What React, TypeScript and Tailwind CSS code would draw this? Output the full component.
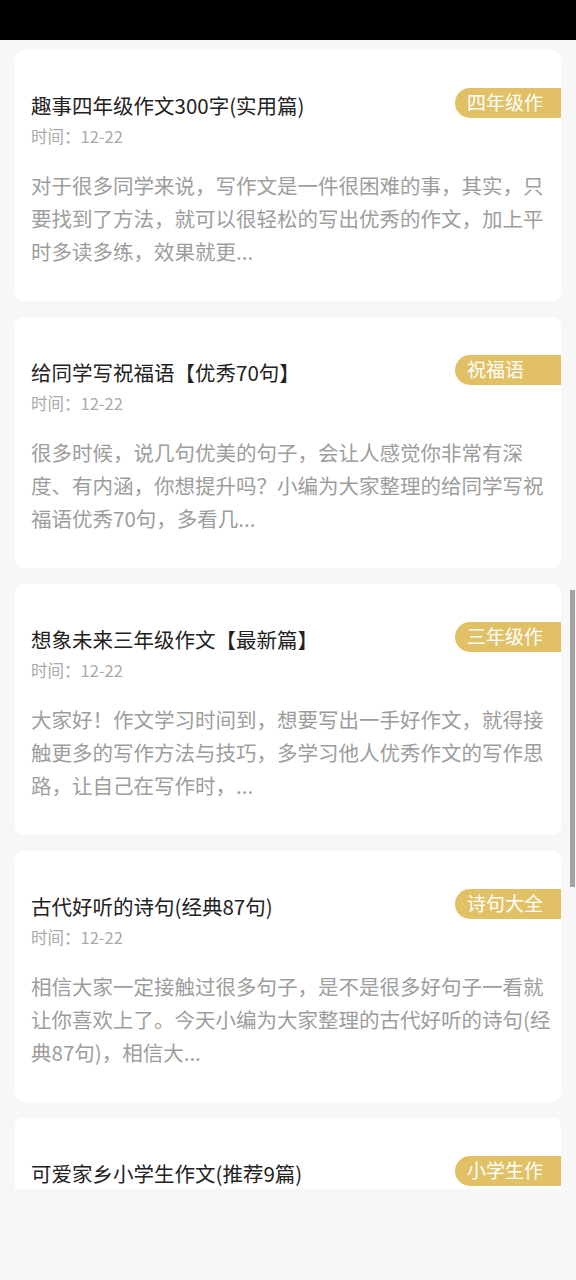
const articles = [
  {
    title: '趣事四年级作文300字(实用篇)',
    tag: '四年级作文',
    time: '12-22',
    desc: '对于很多同学来说，写作文是一件很困难的事，其实，只要找到了方法，就可以很轻松的写出优秀的作文，加上平时多读多练，效果就更...',
  },
  {
    title: '给同学写祝福语【优秀70句】',
    tag: '祝福语',
    time: '12-22',
    desc: '很多时候，说几句优美的句子，会让人感觉你非常有深度、有内涵，你想提升吗？小编为大家整理的给同学写祝福语优秀70句，多看几...',
  },
  {
    title: '想象未来三年级作文【最新篇】',
    tag: '三年级作文',
    time: '12-22',
    desc: '大家好！作文学习时间到，想要写出一手好作文，就得接触更多的写作方法与技巧，多学习他人优秀作文的写作思路，让自己在写作时，...',
  },
  {
    title: '古代好听的诗句(经典87句)',
    tag: '诗句大全',
    time: '12-22',
    desc: '相信大家一定接触过很多句子，是不是很多好句子一看就让你喜欢上了。今天小编为大家整理的古代好听的诗句(经典87句)，相信大...',
  },
  {
    title: '可爱家乡小学生作文(推荐9篇)',
    tag: '小学生作文',
    time: '12-22',
    desc: '家乡是每个人心中最温暖的地方，小编为大家整理的可爱家乡小学生作文(推荐9篇)，希望对大家有所帮助，欢迎阅读...',
  },
]

function ArticleCard({ item }: { item: (typeof articles)[number] }) {
  return (
    <div className="relative bg-white rounded-[8px] pt-[41px] pb-[33px] pl-4 pr-[8px]">
      <div className="pr-[120px] text-[20.5px] leading-[28px] text-[#222] truncate">{item.title}</div>
      <div className="mt-[6px] text-[16.5px] leading-[22px] text-[#aaa]">时间：{item.time}</div>
      <p className="mt-[22px] text-[20.5px] leading-[33px] text-[#9d9d9d]">{item.desc}</p>
      {/* tag is fixed width, extra characters wrap out of view */}
      <div className="absolute right-0 top-[38px] w-[106px] h-[30px] overflow-hidden rounded-l-full bg-[#e2c166] pl-3 text-[19px] leading-[27px] text-white break-all">
        {item.tag}
      </div>
    </div>
  )
}

export default function App() {
  return (
    <div
      className="relative w-[576px] h-[1280px] bg-[#f7f7f7] flex flex-col overflow-hidden"
      style={{ fontFamily: '"Noto Sans CJK SC", "Noto Sans", sans-serif' }}
    >
      <div className="h-[40px] bg-black shrink-0" />
      <div className="h-[1149px] overflow-hidden px-[15px] pt-[10px] flex flex-col gap-[16px]">
        {articles.map((a) => (
          <ArticleCard key={a.title} item={a} />
        ))}
      </div>
      <div className="absolute right-[1px] top-[590px] w-[5px] h-[297px] bg-[#a3a3a3]" />
    </div>
  )
}
